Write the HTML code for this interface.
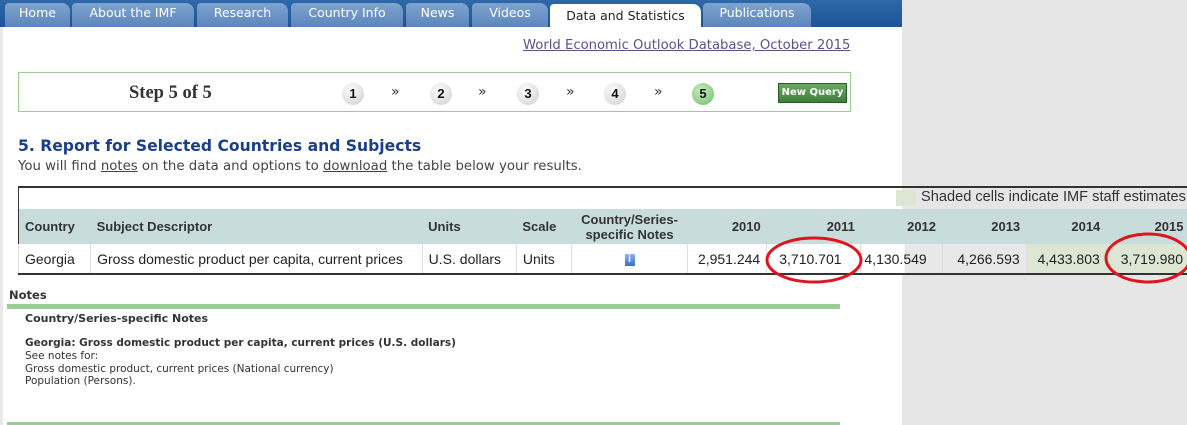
<!DOCTYPE html>
<html><head><meta charset="utf-8"><style>
*{margin:0;padding:0;box-sizing:border-box}
body{width:1187px;height:425px;background:#e6e6e6;position:relative;overflow:hidden;font-family:"DejaVu Sans",Verdana,sans-serif}
.a{position:absolute;white-space:nowrap}
#page{left:0;top:0;width:902px;height:425px;background:#fff;border-left:3px solid #e8e8e8}
#bar{left:0;top:0;width:902px;height:27px;background:linear-gradient(#2e68a8,#1c5596)}
.tab{position:absolute;top:3px;height:24px;background:linear-gradient(#7ea3cf,#5c86bb);color:#fff;font-family:"DejaVu Sans",sans-serif;font-size:12.5px;text-align:center;line-height:20px;border-radius:4px 8px 0 0}
.tab.on{background:#fff;color:#222;top:4px;height:25px;line-height:24px}
.circ{position:absolute;top:83px;width:22px;height:22px;border-radius:50%;background:radial-gradient(circle at 40% 35%,#fff,#ccc);font:bold 13px "Liberation Sans",sans-serif;text-align:center;line-height:22px;color:#111}
.ch{position:absolute;top:84px;font-size:14px;color:#333}
table{position:absolute;left:18px;top:186px;border-collapse:collapse;font-family:"Liberation Sans",Arial,sans-serif;font-size:14px;color:#222;border-top:2px solid #333;border-bottom:2px solid #333;border-left:1px solid #333}
td{padding:0 6px;white-space:nowrap}
.hd td{background:#c9dcdc;font-weight:bold;font-size:13px;color:#333;height:35px}
.dr td{height:30px;border-left:1px solid #ddd;border-right:1px solid #ddd}
.r{text-align:right}
</style></head><body>
<div class="a" id="page"></div>
<div class="a" id="bar"></div>
<div class="tab" style="left:5px;width:65px">Home</div>
<div class="tab" style="left:72px;width:122px">About the IMF</div>
<div class="tab" style="left:197px;width:91px">Research</div>
<div class="tab" style="left:291px;width:112px">Country Info</div>
<div class="tab" style="left:406px;width:63px">News</div>
<div class="tab" style="left:472px;width:76px">Videos</div>
<div class="tab on" style="left:550px;width:151px">Data and Statistics</div>
<div class="tab" style="left:703px;width:108px">Publications</div>
<div class="a" style="left:523px;top:38px;font-size:13.2px;color:#55558a;text-decoration:underline">World Economic Outlook Database, October 2015</div>
<div class="a" style="left:18px;top:72px;width:833px;height:40px;border:1px solid #9bcc96"></div>
<div class="a" style="left:129px;top:83px;font:bold 18.5px 'Liberation Serif',serif;color:#333">Step 5 of 5</div>
<div class="circ" style="left:342px">1</div><div class="ch" style="left:391px">»</div>
<div class="circ" style="left:430px">2</div><div class="ch" style="left:478px">»</div>
<div class="circ" style="left:517px">3</div><div class="ch" style="left:566px">»</div>
<div class="circ" style="left:604px">4</div><div class="ch" style="left:654px">»</div>
<div class="circ" style="left:692px;background:radial-gradient(circle at 40% 35%,#c8ecc0,#6cbf66)">5</div>
<div class="a" style="left:778px;top:83px;width:69px;height:20px;background:linear-gradient(#6aa864,#3f7f3a);border:1px solid #2d5a2a;color:#fff;font:bold 10px 'DejaVu Sans',sans-serif;text-align:center;line-height:18px;overflow:hidden">New Query</div>
<div class="a" style="left:18px;top:137px;font:bold 15.6px 'DejaVu Sans',sans-serif;color:#1a3f8a">5. Report for Selected Countries and Subjects</div>
<div class="a" style="left:18px;top:159px;font-size:13.3px;color:#444">You will find <u>notes</u> on the data and options to <u>download</u> the table below your results.</div>
<div class="a" style="left:896px;top:190px;width:20px;height:16px;background:#dce6d2"></div>
<div class="a" style="left:921px;top:189px;font:14.6px 'Liberation Sans',sans-serif;color:#333">Shaded cells indicate IMF staff estimates</div>
<table style="width:1172px">
<tr><td colspan="11" style="height:22px"></td></tr>
<tr class="hd"><td style="width:72px">Country</td><td style="width:331px">Subject Descriptor</td><td style="width:94px">Units</td><td style="width:55px">Scale</td><td style="width:116px;text-align:center;line-height:15px">Country/Series-<br>specific Notes</td><td class="r" style="width:79px">2010</td><td class="r" style="width:94px">2011</td><td class="r" style="width:81px">2012</td><td class="r" style="width:84px">2013</td><td class="r" style="width:80px">2014</td><td class="r" style="width:83px">2015</td></tr>
<tr class="dr"><td style="background:#fff">Georgia</td><td style="background:#fff">Gross domestic product per capita, current prices</td><td style="background:#fff">U.S. dollars</td><td style="background:#fff">Units</td><td style="background:#fff;text-align:center"><span style="display:inline-block;width:10px;height:12px;background:linear-gradient(#8fb4ea,#3a6cc8);color:#fff;font-size:10px;line-height:12px;font-weight:bold;vertical-align:middle">i</span></td><td class="r" style="background:#fff">2,951.244</td><td style="background:#fff;padding-left:12px">3,710.701</td><td style="background:linear-gradient(90deg,#fff 43px,#e8e8e8 43px);padding-left:3px">4,130.549</td><td class="r" style="background:#e8e8e8">4,266.593</td><td class="r" style="background:#dce6d2">4,433.803</td><td class="r" style="background:#dce6d2">3,719.980</td></tr>
</table>
<svg class="a" style="left:0;top:0" width="1187" height="425"><ellipse cx="814" cy="260" rx="47" ry="22" fill="none" stroke="#e0141e" stroke-width="3"/><ellipse cx="1148" cy="258" rx="42" ry="24" fill="none" stroke="#e0141e" stroke-width="3"/></svg>
<div class="a" style="left:9px;top:288px;font:bold 11.5px 'DejaVu Sans',sans-serif;color:#333">Notes</div>
<div class="a" style="left:7px;top:304px;width:833px;height:5px;background:#9bcc96"></div>
<div class="a" style="left:25px;top:312px;font:bold 11px 'DejaVu Sans',sans-serif;color:#333">Country/Series-specific Notes</div>
<div class="a" style="left:25px;top:337px;font:bold 10.5px 'DejaVu Sans',sans-serif;color:#333">Georgia: Gross domestic product per capita, current prices (U.S. dollars)</div>
<div class="a" style="left:25px;top:350px;font:10.5px 'DejaVu Sans',sans-serif;color:#333;line-height:12.5px">See notes for:<br>Gross domestic product, current prices (National currency)<br>Population (Persons).</div>
<div class="a" style="left:7px;top:422px;width:833px;height:3px;background:#9bcc96"></div>
</body></html>
